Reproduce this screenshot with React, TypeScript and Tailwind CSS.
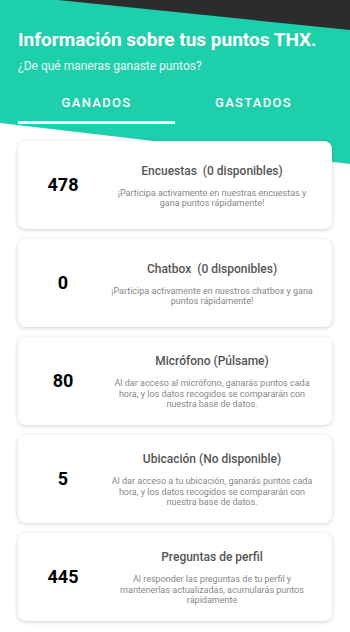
import React from "react";

const items = [
  {
    n: "478",
    t: "Encuestas  (0 disponibles)",
    d: "¡Participa activamente en nuestras encuestas y gana puntos rápidamente!",
  },
  {
    n: "0",
    t: "Chatbox  (0 disponibles)",
    d: "¡Participa activamente en nuestros chatbox y gana puntos rápidamente!",
  },
  {
    n: "80",
    t: "Micrófono (Púlsame)",
    d: "Al dar acceso al micrófono, ganarás puntos cada hora, y los datos recogidos se compararán con nuestra base de datos.",
  },
  {
    n: "5",
    t: "Ubicación (No disponible)",
    d: "Al dar acceso a tu ubicación, ganarás puntos cada hora, y los datos recogidos se compararán con nuestra base de datos.",
  },
  {
    n: "445",
    t: "Preguntas de perfil",
    d: "Al responder las preguntas de tu perfil y mantenerlas actualizadas, acumularás puntos rápidamente",
  },
];

export default function App() {
  return (
    <div
      className="relative w-[350px] h-[632px] overflow-hidden bg-white"
      style={{ fontFamily: "Roboto, 'Noto Sans', sans-serif" }}
    >
      <svg
        className="absolute inset-0"
        width="350"
        height="632"
        viewBox="0 0 350 632"
      >
        <polygon points="0,0 350,0 350,164 0,123" fill="#1dcfaa" />
        <polygon points="58,0 350,0 350,30" fill="#2c2c2c" />
      </svg>
      <div className="relative flex flex-col px-[18px]">
        <h1 className="pt-[29px] text-[19px] leading-[22px] font-bold text-white">
          Información sobre tus puntos THX.
        </h1>
        <p className="mt-[7px] text-[12px] leading-[16px] text-white/90">
          ¿De qué maneras ganaste puntos?
        </p>
        <div className="mt-[21px] grid grid-cols-2">
          <div className="flex flex-col items-center">
            <span className="text-[13px] leading-[16px] font-medium tracking-[1.3px] text-white">
              GANADOS
            </span>
            <div className="mt-[10px] h-[2.5px] w-full bg-white" />
          </div>
          <div className="flex flex-col items-center">
            <span className="text-[13px] leading-[16px] font-medium tracking-[1.3px] text-white">
              GASTADOS
            </span>
          </div>
        </div>
        <div className="mt-[17px] flex flex-col gap-[10px]">
          {items.map((it) => (
            <div
              key={it.n}
              className="flex h-[88px] items-center rounded-[8px] bg-white shadow-[0_1px_4px_rgba(0,0,0,0.18)]"
            >
              <div className="w-[90px] text-center text-[18px] font-bold text-black">
                {it.n}
              </div>
              <div className="flex w-[208px] flex-col items-center pt-[3px] text-center">
                <div className="whitespace-pre text-[12px] leading-[15px] font-medium text-[#555]">
                  {it.t}
                </div>
                <div className="mt-[9px] text-[9px] leading-[10.5px] text-[#888]">
                  {it.d}
                </div>
              </div>
            </div>
          ))}
        </div>
      </div>
    </div>
  );
}
